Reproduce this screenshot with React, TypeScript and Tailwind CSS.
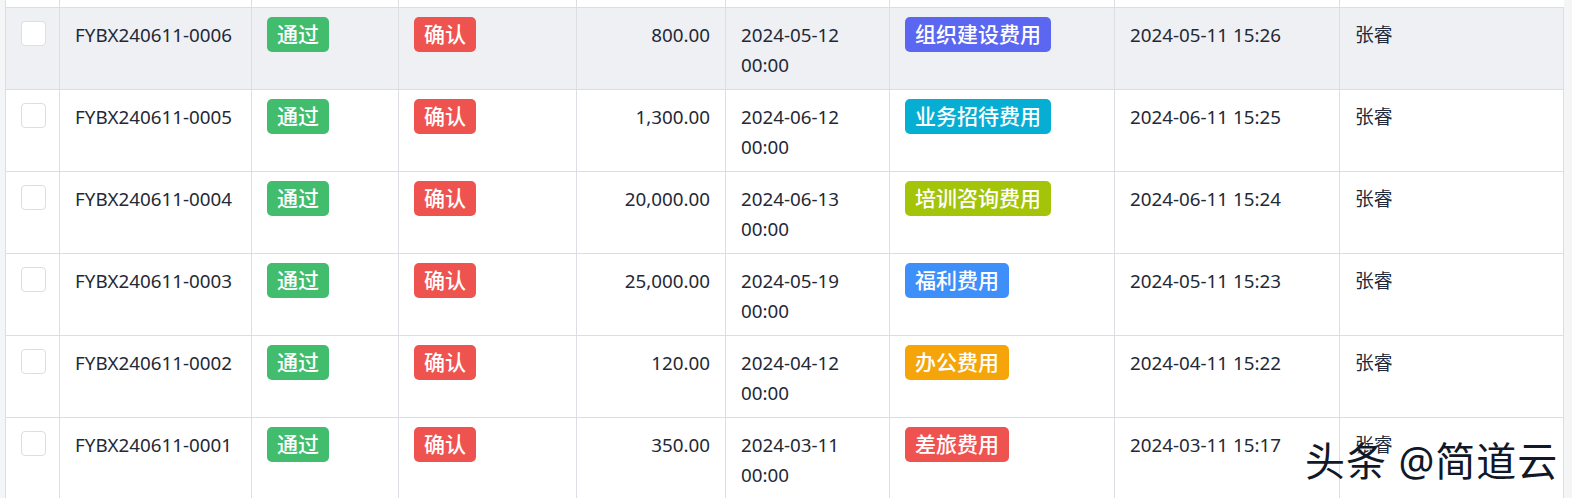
const rows = [
  { no: 'FYBX240611-0006', amount: '800.00', date: '2024-05-12', type: '组织建设费用', color: 'bg-[#5b67f1]', time: '2024-05-11 15:26', active: true },
  { no: 'FYBX240611-0005', amount: '1,300.00', date: '2024-06-12', type: '业务招待费用', color: 'bg-[#06aed4]', time: '2024-06-11 15:25' },
  { no: 'FYBX240611-0004', amount: '20,000.00', date: '2024-06-13', type: '培训咨询费用', color: 'bg-[#a3c408]', time: '2024-06-11 15:24' },
  { no: 'FYBX240611-0003', amount: '25,000.00', date: '2024-05-19', type: '福利费用', color: 'bg-[#3f8ffb]', time: '2024-05-11 15:23' },
  { no: 'FYBX240611-0002', amount: '120.00', date: '2024-04-12', type: '办公费用', color: 'bg-[#f5a50a]', time: '2024-04-11 15:22' },
  { no: 'FYBX240611-0001', amount: '350.00', date: '2024-03-11', type: '差旅费用', color: 'bg-[#ef5350]', time: '2024-03-11 15:17' },
];

const grid = 'grid grid-cols-[54px_192px_147px_178px_149px_164px_225px_225px_225px]';
const cell = 'border-l border-[#dcdee3] px-[15px] pt-[12px]';
const tagCell = 'flex items-start border-l border-[#dcdee3] px-[15px] pt-[9px]';

function Tag({ text, color }: { text: string; color: string }) {
  return (
    <span className={`flex h-[35px] items-center rounded-[5px] px-[10px] text-[21px] font-medium leading-none text-white ${color}`}>
      {text}
    </span>
  );
}

export default function App() {
  return (
    <div className="relative h-[498px] w-[1572px] overflow-hidden bg-[#f4f5f7] pl-[5px] pr-[8px] font-['Noto_Sans','Noto_Sans_CJK_SC',sans-serif] text-[18.8px] leading-[30px] text-[#1f2937]">
      <div className="bg-white">
        <div className={`${grid} h-[8px] border-b border-[#dcdee3]`}>
          {Array.from({ length: 9 }).map((_, i) => (
            <div key={i} className="border-l border-[#dcdee3]" />
          ))}
        </div>
        {rows.map((r) => (
          <div key={r.no} className={`${grid} h-[82px] border-b border-[#dcdee3] ${r.active ? 'bg-[#eef0f4]' : 'bg-white'}`}>
            <div className="border-l border-[#dcdee3] pl-[15px] pt-[13px]">
              <div className="h-[25px] w-[25px] rounded-[4px] border border-[#dcdee3] bg-white" />
            </div>
            <div className={cell}>{r.no}</div>
            <div className={tagCell}><Tag text="通过" color="bg-[#41bd6d]" /></div>
            <div className={tagCell}><Tag text="确认" color="bg-[#ef5350]" /></div>
            <div className={`${cell} text-right`}>{r.amount}</div>
            <div className={cell}>{r.date}<br />00:00</div>
            <div className={tagCell}><Tag text={r.type} color={r.color} /></div>
            <div className={cell}>{r.time}</div>
            <div className={`${cell} border-r`}>张睿</div>
          </div>
        ))}
      </div>
      <div className="absolute left-[1305px] top-[435px] whitespace-nowrap text-[40px] font-normal leading-[52px] tracking-[1px] text-[#111827] [text-shadow:1px_1px_0_#ffffff]">
        头条 @简道云
      </div>
    </div>
  );
}
